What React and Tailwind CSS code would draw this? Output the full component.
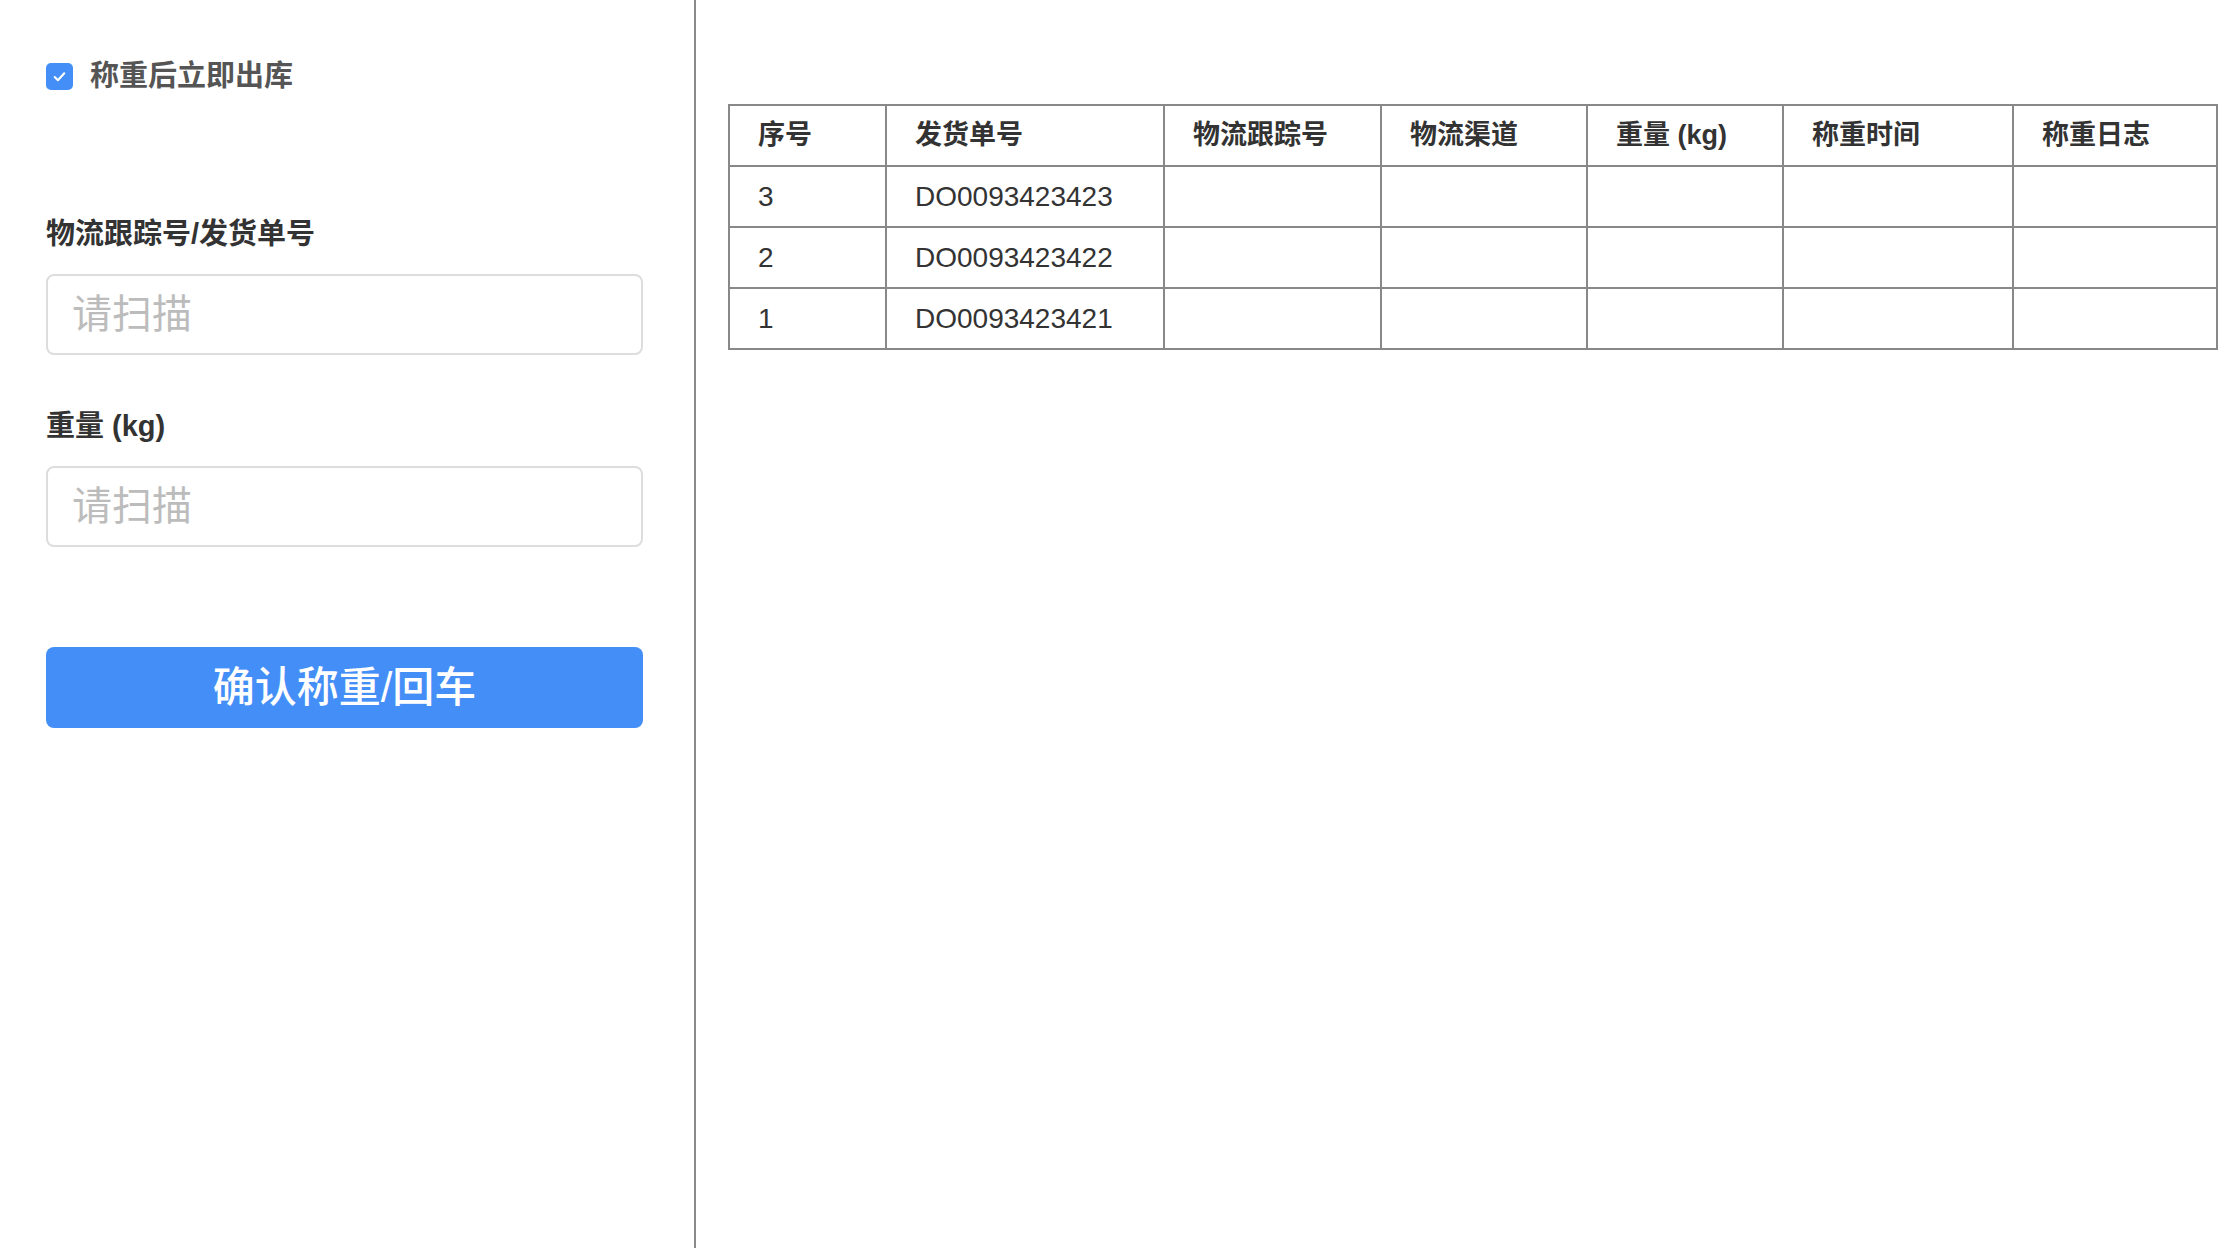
import { useState } from "react";

const FONT = { fontFamily: '"Liberation Sans", "Noto Sans CJK SC", sans-serif' };

const rows = [
  { no: 3, order: "DO0093423423" },
  { no: 2, order: "DO0093423422" },
  { no: 1, order: "DO0093423421" },
];

const headers = [
  { label: "序号", w: "w-[157px]" },
  { label: "发货单号", w: "w-[278px]" },
  { label: "物流跟踪号", w: "w-[217px]" },
  { label: "物流渠道", w: "w-[206px]" },
  { label: "重量 (kg)", w: "w-[196px]" },
  { label: "称重时间", w: "w-[230px]" },
  { label: "称重日志", w: "w-[204px]" },
];

const App = () => {
  const [checked, setChecked] = useState(true);
  const [tracking, setTracking] = useState("");
  const [weight, setWeight] = useState("");

  return (
    <div className="flex min-h-[1248px] w-full bg-white" style={FONT}>
      {/* left form panel */}
      <div className="w-[694px] shrink-0 pl-[46px] pr-[51px] pt-[56px]">
        <label
          className="flex items-center gap-[17px] h-10 cursor-pointer"
          onClick={() => setChecked(!checked)}
        >
          <span
            className={`flex items-center justify-center w-[27px] h-[27px] rounded-[5px] ${
              checked ? "bg-[#448ef7]" : "border-2 border-[#ccc] bg-white"
            }`}
          >
            {checked && (
              <svg viewBox="0 0 16 16" className="w-[17px] h-[17px]">
                <path
                  d="M3.5 8.5l3 3 6-6.5"
                  fill="none"
                  stroke="white"
                  strokeWidth="2"
                  strokeLinecap="round"
                  strokeLinejoin="round"
                />
              </svg>
            )}
          </span>
          <span className="text-[29px] font-semibold text-[#555] leading-10">
            称重后立即出库
          </span>
        </label>

        <div className="mt-[118px] text-[29px] font-bold text-[#333] leading-10">
          物流跟踪号/发货单号
        </div>
        <input
          value={tracking}
          onChange={(e) => setTracking(e.target.value)}
          placeholder="请扫描"
          className="mt-[20px] w-[597px] h-[81px] border-2 border-[#ddd] rounded-[8px] pl-6 text-[40px] text-[#333] placeholder:text-[#bcbcbc] outline-none"
          style={FONT}
        />

        <div className="mt-[51px] text-[29px] font-bold text-[#333] leading-10">
          重量 (kg)
        </div>
        <input
          value={weight}
          onChange={(e) => setWeight(e.target.value)}
          placeholder="请扫描"
          className="mt-[20px] w-[597px] h-[81px] border-2 border-[#ddd] rounded-[8px] pl-6 text-[40px] text-[#333] placeholder:text-[#bcbcbc] outline-none"
          style={FONT}
        />

        <button
          className="mt-[100px] w-[597px] h-[81px] rounded-[8px] bg-[#448ef7] text-white text-[42px] font-medium"
          style={FONT}
        >
          确认称重/回车
        </button>
      </div>

      {/* divider */}
      <div className="w-[2px] shrink-0 bg-[#8a8a8a]" />

      {/* table panel */}
      <div className="flex-1 pl-[32px] pt-[104px]">
        <table className="table-fixed border-collapse border-2 border-[#888] w-[1488px]">
          <thead>
            <tr className="h-[61px]">
              {headers.map((h) => (
                <th
                  key={h.label}
                  className={`${h.w} border-2 border-[#888] text-left pl-[28px] text-[27px] font-bold text-[#333]`}
                >
                  {h.label}
                </th>
              ))}
            </tr>
          </thead>
          <tbody>
            {rows.map((r) => (
              <tr key={r.no} className="h-[61px]">
                <td className="border-2 border-[#888] pl-[28px] text-[28px] text-[#333]">
                  {r.no}
                </td>
                <td className="border-2 border-[#888] pl-[28px] text-[28px] text-[#333]">
                  {r.order}
                </td>
                <td className="border-2 border-[#888]" />
                <td className="border-2 border-[#888]" />
                <td className="border-2 border-[#888]" />
                <td className="border-2 border-[#888]" />
                <td className="border-2 border-[#888]" />
              </tr>
            ))}
          </tbody>
        </table>
      </div>
    </div>
  );
};

export default App;
